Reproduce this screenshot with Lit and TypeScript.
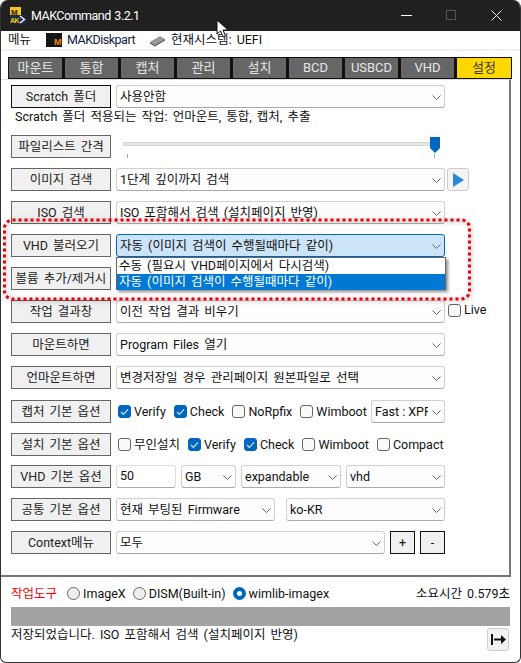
import { LitElement, html, css } from "lit";
import { customElement } from "lit/decorators.js";

const chev = html`<svg class="chev" width="9" height="5" viewBox="0 0 9 5"><path d="M.5 .5L4.500 4.500 8.500 .5" fill="none" stroke="#666" stroke-width="1"/></svg>`;
const sel = (t: string, cls = "") => html`<div class="sel ${cls}"><span class="st">${t}</span>${chev}</div>`;
const btn = (t: string, cls = "") => html`<div class="btn ${cls}">${t}</div>`;
const chk = (t: string, on = false) => html`<span class="chk"><span class="box ${on ? "on" : ""}">${on ? html`<svg width="9" height="8" viewBox="0 0 9 8"><path d="M1 4l2.400 2.400L8 1.400" fill="none" stroke="#cfe4f7" stroke-width="1.2"/></svg>` : ""}</span>${t}</span>`;
const radio = (t: string, on = false) => html`<span class="radio"><span class="dot ${on ? "on" : ""}"></span>${t}</span>`;
const tabs = ["마운트", "통합", "캡처", "관리", "설치", "BCD", "USBCD", "VHD", "설정"];

@customElement("app-root")
export class AppRoot extends LitElement {
  static styles = css`
    :host { display: block; width: 521px; height: 663px; background: #fff; font: 12.5px/16px Roboto, "Noto Sans CJK KR", sans-serif; word-spacing: 2px; color: #111; overflow: hidden; }
    .win { position: relative; width: 521px; height: 663px; box-sizing: border-box; border-left: 1px solid #333; border-right: 1px solid #333; border-bottom: 1px solid #333; display: flex; flex-direction: column; background: #fff; border-radius: 8px 8px 6px 6px; overflow: hidden; }
    .title { height: 31px; flex: none; background: #202020; color: #fff; display: flex; align-items: center; gap: 4px; padding-left: 8px; font-size: 12.5px; letter-spacing: -.5px; word-spacing: 1px; }
    .title .sp { flex: 1; }
    .wc { display: flex; align-items: center; padding-right: 1px; }
    .wc span { width: 45px; display: flex; justify-content: center; }
    .menu { height: 18px; flex: none; display: flex; align-items: center; padding-left: 7px; border-bottom: 2px solid #f0f0f0; }
    .mi { display: flex; align-items: center; gap: 5px; }
    .m1 { margin-right: 15px; }
    .m2 { margin-right: 14px; letter-spacing: -.5px; color: #102040; }
    .tabs { display: flex; padding: 6px 0 0 7px; height: 22px; flex: none; }
    .tab { width: 56px; box-sizing: border-box; height: 22px; border: 1px solid #111; border-right-width: 2px; background: #666; color: #e6e6e6; text-align: center; line-height: 20px; font-size: 13px; }
    .tab.on { background: #ffd700; color: #333; border-right-width: 1px; }
    .panel { flex: none; height: 498px; box-sizing: border-box; border-top: 1px solid #ddd; border-right: 2px solid #777; border-bottom: 2px solid #777; width: 510px; padding: 5px 0 0 10px; display: flex; flex-direction: column; gap: 10px; }
    .row { display: flex; align-items: center; gap: 5px; height: 23px; flex: none; width: 434px; }
    .btn { width: 100px; height: 23px; box-sizing: border-box; border: 1px solid #666; background: #f0f0f0; text-align: center; line-height: 22px; flex: none; white-space: nowrap; color: #222; }
    .btn.dark { border-color: #111; }
    .sel { position: relative; height: 23px; box-sizing: border-box; border: 1px solid #d0d0d0; border-bottom-color: #aaa; border-radius: 3px; background: #fdfdfd; flex: 1; min-width: 0; display: flex; align-items: center; padding: 1px 3px 0; white-space: nowrap; }
    .st { flex: 1; overflow: hidden; }
    .chev { flex: none; margin-left: 4px; }
    .w330 { flex: 0 0 329px; }
    .w55 { flex: 0 0 55px; }
    .w100 { flex: 0 0 100px; }
    .w99 { flex: 0 0 99px; }
    .w159 { flex: 0 0 159px; }
    .ml6 { margin-left: 6px; }
    .note { height: 14px; line-height: 14px; margin: -8px 0 0 4px; white-space: nowrap; flex: none; }
    .mt1 { margin-top: 1px; }
    .mtn { margin-top: -1px; }
    .slider { position: relative; width: 329px; height: 23px; }
    .track { position: absolute; left: 7px; right: 6px; top: 7px; height: 2px; background: #e6e6e6; border: 1px solid #d6d6d6; }
    .thumb { position: absolute; left: 314px; top: 2px; }
    .tick { position: absolute; width: 1px; height: 4px; background: #aaa; top: 19px; }
    .t1 { left: 11px; }
    .t2 { left: 318px; }
    .play { width: 22px; height: 23px; box-sizing: border-box; border: 1px solid #ccc; border-radius: 3px; background: #f4f4f4; display: flex; align-items: center; justify-content: center; flex: none; margin-left: -3px; }
    .focus { background: #cce4f7; border-color: #0067c0; }
    .chk { display: inline-flex; align-items: center; gap: 3px; white-space: nowrap; color: #111; }
    .box { width: 13px; height: 13px; box-sizing: border-box; border: 1px solid #666; border-radius: 3px; background: #fafafa; display: flex; align-items: center; justify-content: center; flex: none; }
    .box.on { background: #0067c0; border-color: #0067c0; }
    .live { margin-left: -2px; }
    .opts { display: flex; align-items: center; gap: 8px; width: 250px; flex: none; padding-left: 2px; box-sizing: border-box; }
    .optsb { display: flex; align-items: center; gap: 8px; flex: none; padding-left: 2px; }
    .mini { flex: 0 0 74px; word-spacing: 0; }
    .input { width: 60px; height: 23px; box-sizing: border-box; border: 1px solid #ddd; border-bottom-color: #aaa; border-radius: 3px; padding: 0 3px; line-height: 20px; flex: none; }
    .sq { width: 25px; height: 23px; box-sizing: border-box; border: 1px solid #111; background: #f0f0f0; text-align: center; line-height: 21px; flex: none; }
    .foot { flex: 1; padding: 0 0 0 10px; width: 499px; }
    .tools { display: flex; align-items: center; height: 30px; box-sizing: border-box; padding-top: 3px; gap: 7px; }
    .red { color: #f00; margin-right: 3px; }
    .radio { display: inline-flex; align-items: center; gap: 3px; white-space: nowrap; }
    .dot { width: 13px; height: 13px; box-sizing: border-box; border: 1px solid #666; border-radius: 50%; background: #eee; flex: none; }
    .dot.on { background: #fff; border: 4px solid #0067c0; }
    .time { margin-left: auto; }
    .bar { height: 19px; background: #a3a3a3; }
    .status { display: flex; justify-content: space-between; }
    .stxt { height: 18px; line-height: 18px; }
    .go { width: 22px; height: 23px; box-sizing: border-box; border: 1px solid #ccc; border-radius: 3px; background: #f2f2f2; display: flex; align-items: center; justify-content: center; margin: 2px 1px 0 0; }
    .drop { position: absolute; left: 115px; top: 257px; width: 330px; height: 33px; box-sizing: border-box; border: 1px solid #666; background: #fff; box-shadow: 2px 2px 3px rgba(0,0,0,.45); line-height: 16px; white-space: nowrap; }
    .drop div { height: 16px; padding-left: 2px; }
    .drop .hl { background: #0078d4; color: #fff; }
    .ring { position: absolute; left: 0; top: 210px; filter: drop-shadow(1px 1px 2px rgba(0,0,0,.4)); }
    .cursor { position: absolute; left: 215px; top: 19px; }
  `;
  render() {
    return html`<div class="win">
      <div class="title">
        <svg width="18" height="18" viewBox="0 0 18 18"><rect x="1" y="8" width="16" height="9" fill="#1c2a44"/><rect x="1" y="0" width="11" height="8" fill="#f5c518"/><text x="2" y="7.500" font-size="8" font-weight="700" fill="#222" font-family="Liberation Sans">M</text><text x="1" y="15.500" font-size="7" font-weight="700" fill="#f5c518" font-family="Liberation Sans">AK</text><path d="M11 9l4.500 3.500-4.500 3.500" fill="none" stroke="#fff" stroke-width="1.300"/></svg>
        <span>MAKCommand 3.2.1</span><span class="sp"></span>
        <div class="wc">
          <span><svg width="11" height="2"><rect width="11" height="1" fill="#fff"/></svg></span>
          <span><svg width="11" height="11"><rect x=".5" y=".5" width="9" height="9" fill="none" stroke="#555"/></svg></span>
          <span><svg width="11" height="11"><path d="M.5 .5l10 10M10.500 .5l-10 10" stroke="#eee"/></svg></span>
        </div>
      </div>
      <div class="menu">
        <span class="mi m1">메뉴</span>
        <span class="mi m2"><svg width="16" height="14" viewBox="0 0 16 14"><rect width="16" height="14" fill="#151515"/><text x="8" y="12" font-size="9" font-weight="700" fill="#f08a00" font-family="Liberation Sans">M</text></svg>MAKDiskpart</span>
        <span class="mi"><svg width="17" height="13" viewBox="0 0 17 13"><path d="M1 8l10-6 5 3-10 6z" fill="#999"/><path d="M1 8l5 3v1.500L1 9.500zM6 11l10-6v1.500l-10 6z" fill="#555"/></svg>현재시스템: UEFI</span>
      </div>
      <div class="tabs">${tabs.map((t, i) => html`<div class="tab ${i === 8 ? "on" : ""}">${t}</div>`)}</div>
      <div class="panel">
        <div class="row">${btn("Scratch 폴더", "dark")}${sel("사용안함", "w330")}</div>
        <div class="note">Scratch 폴더 적용되는 작업: 언마운트, 통합, 캡처, 추출</div>
        <div class="row mt1">${btn("파일리스트 간격")}
          <div class="slider"><div class="track"></div>
            <svg class="thumb" width="10" height="16" viewBox="0 0 10 16"><path d="M0 0h10v11l-5 5-5-5z" fill="#0067c0"/></svg>
            <span class="tick t1"></span><span class="tick t2"></span></div></div>
        <div class="row">${btn("이미지 검색")}${sel("1단계 깊이까지 검색", "w330")}
          <div class="play"><svg width="12" height="14" viewBox="0 0 12 14"><path d="M1 0l11 7-11 7z" fill="#2b88d8"/></svg></div></div>
        <div class="row">${btn("ISO 검색")}${sel("ISO 포함해서 검색 (설치페이지 반영)", "w330")}</div>
        <div class="row">${btn("VHD 불러오기")}${sel("자동 (이미지 검색이 수행될때마다 같이)", "w330 focus")}</div>
        <div class="row">${btn("볼륨 추가/제거시")}</div>
        <div class="row">${btn("작업 결과창")}${sel("이전 작업 결과 비우기", "w330")}<span class="live">${chk("Live")}</span></div>
        <div class="row">${btn("마운트하면")}${sel("Program Files 열기", "w330")}</div>
        <div class="row">${btn("언마운트하면")}${sel("변경저장일 경우 관리페이지 원본파일로 선택", "w330")}</div>
        <div class="row mt1">${btn("캡처 기본 옵션")}
          <div class="opts">${chk("Verify", true)}${chk("Check", true)}${chk("NoRpfix")}${chk("Wimboot")}</div>
          <div class="sel mini"><span class="st">Fast : XPR</span>${chev}</div></div>
        <div class="row">${btn("설치 기본 옵션")}
          <div class="optsb">${chk("무인설치")}${chk("Verify", true)}${chk("Check", true)}${chk("Wimboot")}${chk("Compact")}</div></div>
        <div class="row mtn">${btn("VHD 기본 옵션")}<div class="input">50</div>${sel("GB", "w55")}${sel("expandable", "w100")}${sel("vhd", "w99")}</div>
        <div class="row">${btn("공통 기본 옵션")}${sel("현재 부팅된 Firmware", "w159")}${sel("ko-KR", "ml6")}</div>
        <div class="row">${btn("Context메뉴")}${sel("모두")}<div class="sq">+</div><div class="sq">-</div></div>
      </div>
      <div class="foot">
        <div class="tools">
          <span class="red">작업도구</span>${radio("ImageX")}${radio("DISM(Built-in)")}${radio("wimlib-imagex", true)}
          <span class="time">소요시간 0.579초</span>
        </div>
        <div class="bar"></div>
        <div class="status"><span class="stxt">저장되었습니다. ISO 포함해서 검색 (설치페이지 반영)</span>
          <div class="go"><svg width="17" height="11" viewBox="0 0 17 11"><path d="M1 0v11h2V0zM4 4.500h7V1l5 4.500-5 4.500V6.500H4z" fill="#111"/></svg></div></div>
      </div>
      <div class="drop"><div>수동 (필요시 VHD페이지에서 다시검색)</div><div class="hl">자동 (이미지 검색이 수행될때마다 같이)</div></div>
      <svg class="ring" width="480" height="100"><rect x="3.500" y="10" width="465" height="79" rx="8" fill="none" stroke="#e8000d" stroke-width="3" stroke-dasharray="3 3"/></svg>
      <svg class="cursor" width="13" height="19" viewBox="0 0 13 19"><path d="M1 1v14l3.500-3 2.500 6 2.500-1-2.500-6h5z" fill="#fff" stroke="#111"/></svg>
    </div>`;
  }
}
